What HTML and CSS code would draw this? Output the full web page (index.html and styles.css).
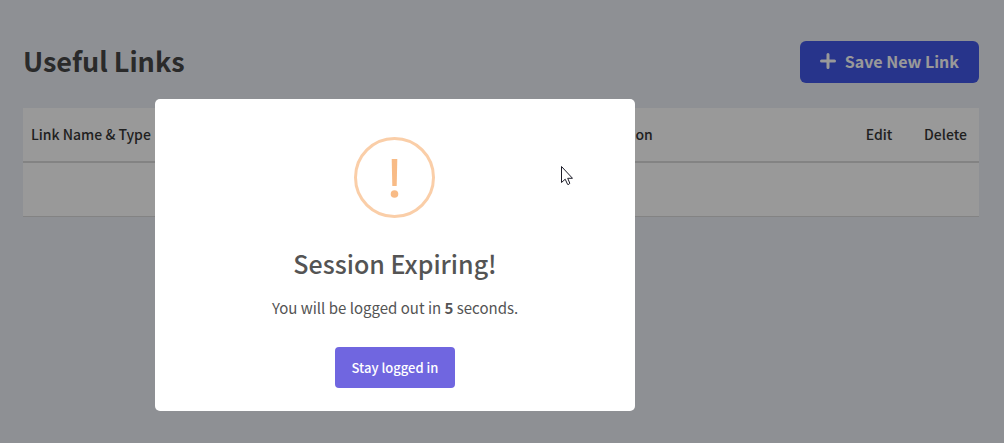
FILE: index.html
```html
<!DOCTYPE html>
<html lang="en">
<head>
  <meta charset="UTF-8">
  <meta name="viewport" content="width=device-width, initial-scale=1.0">
  <title>Useful Links</title>
  <link rel="stylesheet" href="styles.css">
</head>
<body>
  <main class="page">
    <div class="page-header">
      <h1>Useful Links</h1>
      <button type="button" class="btn btn-primary">
        <svg class="icon-plus" viewBox="0 0 16 16" aria-hidden="true">
          <path d="M8 1.5V14.5M1.5 8H14.5"/>
        </svg>
        Save New Link
      </button>
    </div>

    <table class="links-table">
      <thead>
        <tr>
          <th class="col-name">Link Name &amp; Type</th>
          <th class="col-description">Description</th>
          <th class="col-edit">Edit</th>
          <th class="col-delete">Delete</th>
        </tr>
      </thead>
      <tbody>
        <tr>
          <td></td>
          <td></td>
          <td></td>
          <td></td>
        </tr>
      </tbody>
    </table>
  </main>

  <!-- Session timeout -->
  <div class="overlay">
    <div class="modal" role="dialog" aria-modal="true" aria-labelledby="modalTitle">
      <svg class="modal-icon" viewBox="0 0 82 82" aria-hidden="true">
        <circle class="ring" cx="40.5" cy="40.5" r="39"/>
        <path class="mark" d="M37.7 22H43.3L42.7 49H38.3Z"/>
        <circle class="mark" cx="40.5" cy="57" r="3.8"/>
      </svg>
      <h2 id="modalTitle">Session Expiring!</h2>
      <p>You will be logged out in <strong id="seconds">5</strong> seconds.</p>
      <button type="button" class="btn btn-confirm">Stay logged in</button>
      <svg class="cursor" viewBox="0 0 12 20" aria-hidden="true">
        <path d="M.5 .5V16.5L4.2 13.2L6.6 18.4Q8 19 8.8 17.2L6.7 12.3H11.5Z"/>
      </svg>
    </div>
  </div>
</body>
</html>
```
FILE: styles.css
```css
/* Global Styles */
* {
  box-sizing: border-box;
}

body {
  font-family: 'Source Sans Pro', 'Noto Sans CJK SC', sans-serif;
  background: #edf0f7;
  color: #363636;
  margin: 0;
}

.page {
  padding: 41px 25px 24px 23px;
}

.page-header {
  display: flex;
  justify-content: space-between;
  align-items: flex-start;
  margin-bottom: 25px;
}

h1 {
  margin: 0;
  font-size: 27px;
  line-height: 40px;
  font-weight: bold;
  color: #464646;
}

/* Buttons */
.btn {
  display: inline-flex;
  align-items: center;
  justify-content: center;
  border: none;
  font-family: inherit;
  color: #ffffff;
  cursor: pointer;
}

.btn-primary {
  gap: 9px;
  height: 42px;
  padding: 0 20px 2px;
  border-radius: 6px;
  background: #4157e8;
  font-size: 16px;
  font-weight: bold;
}

.icon-plus {
  width: 16px;
  height: 16px;
  fill: none;
  stroke: #ffffff;
  stroke-width: 3;
  stroke-linecap: round;
}

/* Table */
.links-table {
  width: 100%;
  table-layout: fixed;
  border-collapse: separate;
  border-spacing: 0;
  background: #ffffff;
}

.links-table th {
  height: 55px;
  padding: 0 8px 2px;
  border-bottom: 2px solid #dbdbdb;
  font-size: 14px;
  font-weight: 500;
  text-align: left;
}

.links-table td {
  height: 54px;
  padding: 0 8px;
  border-bottom: 1px solid #dbdbdb;
}

.links-table .col-description {
  width: 278px;
}

.links-table .col-edit,
.links-table .col-delete {
  text-align: center;
}

.col-edit {
  width: 66px;
}

.col-delete {
  width: 67px;
}

/* Modal */
.overlay {
  position: fixed;
  inset: 0;
  display: flex;
  justify-content: center;
  align-items: center;
  padding: 67px 214px 0 0;
  background: rgba(0, 0, 0, 0.4);
}

.modal {
  position: relative;
  display: flex;
  flex-direction: column;
  align-items: center;
  width: 480px;
  padding: 38px 20px 23px;
  border-radius: 5px;
  background: #ffffff;
  color: #545454;
}

.modal-icon {
  width: 82px;
  height: 82px;
}

.modal-icon .ring {
  fill: none;
  stroke: #facea8;
  stroke-width: 3;
}

.modal-icon .mark {
  fill: #f8bb86;
}

.modal h2 {
  margin: 24px 0 12px;
  font-size: 25px;
  line-height: 40px;
  font-weight: 500;
}

.modal p {
  margin: 0 0 26px;
  font-size: 15px;
  line-height: 26px;
}

.btn-confirm {
  height: 41px;
  padding: 0 17px 1px;
  border-radius: 4px;
  background: #7066e0;
  font-size: 13px;
  font-weight: 500;
}

.cursor {
  position: absolute;
  top: 67px;
  right: 62px;
  width: 12px;
  height: 20px;
  fill: #ffffff;
  stroke: #1c1c28;
  stroke-width: 1;
}
```
